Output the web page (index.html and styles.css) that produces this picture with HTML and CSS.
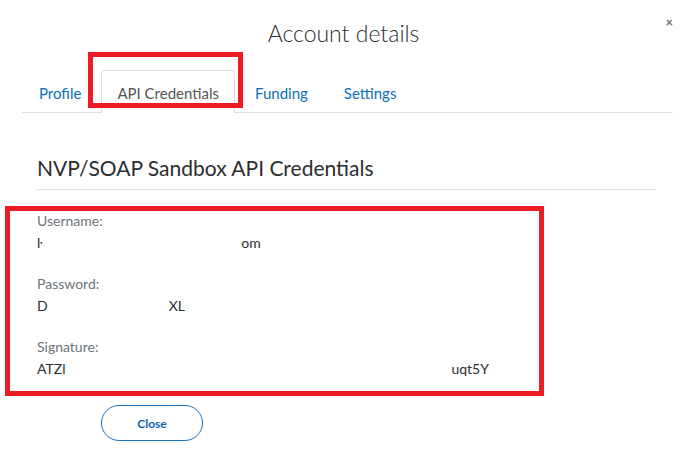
FILE: index.html
```html
<!DOCTYPE html>
<html lang="en">
<head>
<meta charset="utf-8">
<title>Account details</title>
<link rel="stylesheet" href="styles.css">
</head>
<body>
<div class="modal">
  <header class="modal-header">
    <h1 class="modal-title">Account details</h1>
    <button class="modal-close" aria-label="Close">&#215;</button>
  </header>
  <nav class="tabs">
    <a class="tab">Profile</a>
    <a class="tab tab-active">API Credentials</a>
    <a class="tab">Funding</a>
    <a class="tab">Settings</a>
  </nav>
  <section class="creds">
    <h2 class="creds-title">NVP/SOAP Sandbox API Credentials</h2>
    <div class="fields">
      <div class="field">
        <div class="field-label">Username:</div>
        <div class="field-value"><span>ŀ</span><span class="redact redact-user"></span><span>om</span></div>
      </div>
      <div class="field">
        <div class="field-label">Password:</div>
        <div class="field-value"><span>D</span><span class="redact redact-pass"></span><span>XL</span></div>
      </div>
      <div class="field">
        <div class="field-label">Signature:</div>
        <div class="field-value"><span>ATZl</span><span class="redact redact-sig"></span><span>uqt5Y</span></div>
      </div>
    </div>
    <button class="btn-close">Close</button>
  </section>
  <div class="mark mark-tab"></div>
  <div class="mark mark-fields"></div>
</div>
</body>
</html>
```
FILE: styles.css
```css
* { box-sizing: border-box; }
html, body { margin: 0; padding: 0; background: #fff; }
body { font-family: Lato, "Noto Sans", sans-serif; color: #2c2e2f; }

.modal { position: relative; width: 695px; height: 465px; }

.modal-header { position: relative; padding-top: 19px; height: 52px; text-align: center; }
.modal-title { margin: 0; padding-right: 8px; font-size: 23px; font-weight: 300; line-height: 28px; color: #2c2e2f; }
.modal-close {
  position: absolute; top: 14px; right: 22px; border: 0; background: none; padding: 0;
  font: 700 13px/16px Lato, sans-serif; color: #6c7378;
}

.tabs { display: flex; align-items: flex-end; margin: 19px 22px 0; padding-left: 1px; border-bottom: 1px solid #e2e2e2; height: 42px; }
.tab {
  padding: 0 15px; height: 42px; line-height: 44px; font-size: 15px; color: #0b70ba; margin-right: 4px;
  border: 1px solid transparent; border-bottom: 0; border-radius: 4px 4px 0 0;
}
.tab-active { color: #555; background: #fff; border-color: #dcdcdc; margin-bottom: -1px; height: 43px; }

.creds { padding: 42px 38px 0 37px; }
.creds-title { margin: 0; font-size: 21px; font-weight: 400; line-height: 26px; padding-bottom: 8px; border-bottom: 1px solid #e2e2e2; color: #2c2e2f; }

.fields { display: flex; flex-direction: column; gap: 20px; padding-top: 21px; }
.field-label { font-size: 14px; line-height: 20px; color: #6c7378; }
.field-value { display: flex; font-size: 14px; line-height: 23px; color: #2c2e2f; }
.redact { display: inline-block; }
.redact-user { width: 199px; }
.redact-pass { width: 121px; }
.redact-sig { width: 386px; }

.btn-close {
  margin: 25px 0 0 64px; width: 102px; height: 36px; border: 1.5px solid #1a72bb; border-radius: 18px;
  background: #fff; color: #0c65ab; font: 700 12px Lato, sans-serif;
}

.mark { position: absolute; border: 5px solid #ed1c24; }
.mark-tab { left: 88px; top: 52px; width: 155px; height: 56px; }
.mark-fields { left: 5px; top: 206px; width: 539px; height: 190px; }
```
